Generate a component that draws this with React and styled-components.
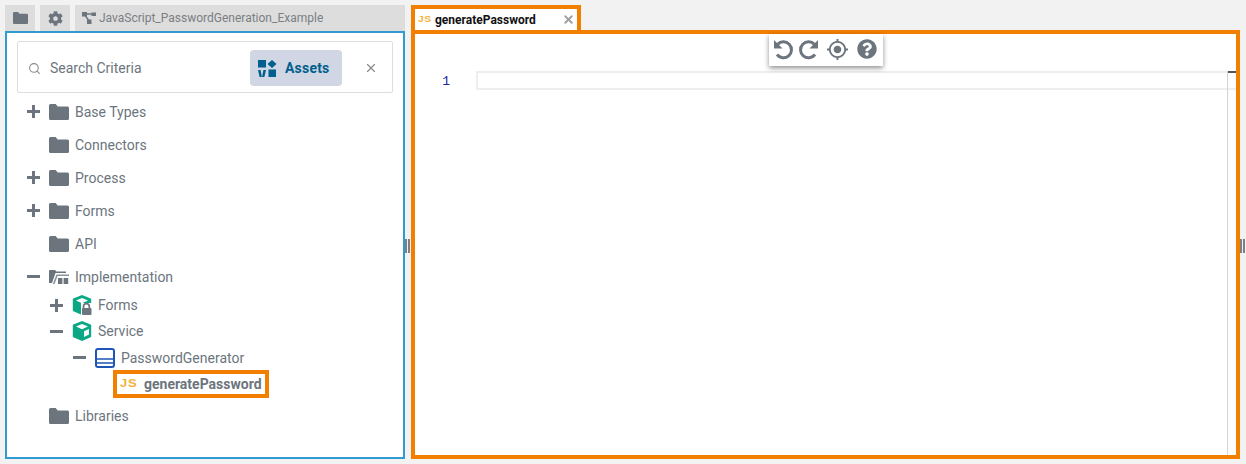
import React from "react";
import styled, { createGlobalStyle } from "styled-components";
import { FaCog, FaQuestionCircle } from "react-icons/fa";
import { MdGpsFixed } from "react-icons/md";
import { Search, X } from "lucide-react";

const Global = createGlobalStyle`
  html, body { margin: 0; padding: 0; background: #f2f2f2; }
  body { font-family: Roboto, "Liberation Sans", sans-serif; }
  * { box-sizing: border-box; }
`;

const Page = styled.div`
  display: flex;
  width: 1246px;
  height: 464px;
  padding: 5px 0 5px 5px;
  overflow: hidden;
`;
const LeftColumn = styled.div`
  width: 400px;
  display: flex;
  flex-direction: column;
`;
const RightColumn = styled.div`
  width: 829px;
  display: flex;
  flex-direction: column;
`;
const Splitter = styled.div`
  width: 6px;
  display: flex;
  align-items: center;
  justify-content: flex-start;
  padding-top: 27px;
`;
const Grip = styled.div`
  width: 5px;
  height: 14px;
  border-left: 2px solid #7c8086;
  border-right: 2px solid #7c8086;
`;
const TabStrip = styled.div`
  display: flex;
  gap: 5px;
  height: 26px;
`;
const IconTab = styled.div`
  width: 30px;
  background: #dddddd;
  display: flex;
  align-items: center;
  justify-content: center;
  color: #6c757d;
`;
const ProjectTab = styled.div`
  flex: 1;
  background: #dddddd;
  display: flex;
  align-items: center;
  gap: 3px;
  padding-left: 7px;
  font-size: 12px;
  color: #7b7f84;
`;
const LeftPanel = styled.div`
  height: 428px;
  background: #fff;
  border: 2px solid #2f9bd1;
  padding: 8px 10px 0;
`;
const SearchBox = styled.div`
  height: 52px;
  border: 1px solid #dddddd;
  border-radius: 2px;
  display: flex;
  align-items: center;
  padding: 2px 0 0 10px;
  color: #6c757d;
  font-size: 14px;
`;
const SearchText = styled.span`
  margin-left: 9px;
  width: 200px;
`;
const AssetsButton = styled.div`
  width: 92px;
  height: 36px;
  background: #d0d6e4;
  border-radius: 4px;
  display: flex;
  align-items: center;
  gap: 8px;
  padding-left: 8px;
  color: #005f8c;
  font-weight: 700;
  font-size: 14px;
  letter-spacing: 0.2px;
`;
const ClearButton = styled.div`
  margin-left: 22px;
  display: flex;
  color: #8a8a8a;
`;
const Tree = styled.div`
  padding-top: 2px;
  margin-left: -10px;
`;
const Row = styled.div`
  height: ${(p) => p.$h}px;
  display: flex;
  align-items: center;
  padding-left: ${(p) => p.$indent}px;
  font-size: 14px;
  color: #6c757d;
`;
const ToggleSlot = styled.div`
  width: 13px;
  height: 13px;
  margin-right: 9px;
  display: flex;
  align-items: center;
  justify-content: center;
`;
const IconSlot = styled.div`
  width: 20px;
  display: flex;
  justify-content: center;
  margin-right: 6px;
`;
const Highlight = styled.div`
  height: 28px;
  width: 156px;
  margin-left: 106px;
  border: 4px solid #f27f00;
  display: flex;
  align-items: center;
  padding-left: 3px;
  gap: 8px;
  font-size: 14px;
  font-weight: 700;
  color: #6c757d;
`;
const JsMark = styled.span`
  display: inline-block;
  width: ${(p) => p.$w}px;
  font-family: "Liberation Sans", sans-serif;
  font-weight: 700;
  font-size: ${(p) => p.$size}px;
  letter-spacing: 0.5px;
  color: #f5b23d;
  line-height: 1;
  transform: scaleX(${(p) => p.$sx});
  transform-origin: left center;
`;
const EditorTab = styled.div`
  width: 170px;
  height: 25px;
  background: #fff;
  border: 4px solid #f27f00;
  border-bottom: 0;
  display: flex;
  align-items: center;
  padding-left: 3px;
  gap: 4px;
  font-size: 12px;
  font-weight: 700;
  color: #111;
`;
const TabTitle = styled.span`
  width: 123px;
`;
const TabClose = styled.div`
  display: flex;
  color: #a0a0a0;
`;
const EditorPanel = styled.div`
  position: relative;
  height: 429px;
  background: #fff;
  border: 4px solid #f27f00;
  padding-top: 37px;
  display: flex;
  flex-direction: column;
`;
const Toolbar = styled.div`
  position: absolute;
  top: 0;
  left: 354px;
  width: 114px;
  height: 32px;
  background: #fff;
  box-shadow: 0 2px 5px rgba(0, 0, 0, 0.45);
  display: flex;
  align-items: center;
  padding: 0 0 2px 3px;
  color: #6c757d;
`;
const ToolSpacer = styled.div`
  width: ${(p) => p.$w}px;
`;
const CodeArea = styled.div`
  flex: 1;
  display: flex;
`;
const Gutter = styled.div`
  width: 61px;
  height: 19px;
  text-align: right;
  padding-right: 26px;
  font-family: "Liberation Mono", monospace;
  font-size: 13px;
  line-height: 21px;
  color: #1a2a9c;
`;
const Lines = styled.div`
  flex: 1;
  display: flex;
`;
const LineColumn = styled.div`
  flex: 1;
`;
const CurrentLine = styled.div`
  height: 19px;
  border: 2px solid #eeeeee;
  border-right: 0;
`;
const Ruler = styled.div`
  width: 9px;
  background: #fdfdfb;
  border-left: 1px solid #d4d4d4;
`;
const RulerHead = styled.div`
  height: 2px;
  background: #555;
`;
const RulerLine = styled.div`
  height: 2px;
  margin-top: 15px;
  background: #eeeeee;
`;

const FolderIcon = () => (
  <svg width="20" height="16" viewBox="0 0 20 16">
    <path d="M0 1.5A1.5 1.5 0 0 1 1.5 0h5.2l2 2.4h9.8A1.5 1.5 0 0 1 20 3.9v10.6a1.5 1.5 0 0 1-1.5 1.5h-17A1.5 1.5 0 0 1 0 14.5z" fill="#6c757d" />
  </svg>
);
const SmallFolder = () => (
  <svg width="15" height="12" viewBox="0 0 20 16">
    <path d="M0 1.5A1.5 1.5 0 0 1 1.5 0h5.2l2 2.4h9.8A1.5 1.5 0 0 1 20 3.9v10.6a1.5 1.5 0 0 1-1.5 1.5h-17A1.5 1.5 0 0 1 0 14.5z" fill="#6c757d" />
  </svg>
);
const OpenFolder = () => (
  <svg width="20" height="14" viewBox="0 0 20 14">
    <path d="M0 1a1 1 0 0 1 1-1h5l1.5 1.5H17V3H6.5L3 13H0z" fill="#6c757d" />
    <path d="M7.5 4.5H20V6H8.6L5.5 14H3.8z" fill="#8a929a" />
    <rect x="9" y="8" width="4.4" height="6" fill="#6c757d" />
    <rect x="14.6" y="8" width="4.6" height="6" fill="#6c757d" />
  </svg>
);
const FlowIcon = () => (
  <svg width="14" height="12" viewBox="0 0 14 12">
    <rect x="0" y="0" width="5" height="4.5" fill="#6c757d" />
    <rect x="9.5" y="0.5" width="4.5" height="3.5" fill="#6c757d" />
    <rect x="5" y="7.5" width="4.5" height="4.5" fill="#6c757d" />
    <path d="M4 2h7M3 3l4 6" stroke="#6c757d" strokeWidth="1.4" fill="none" />
  </svg>
);
const AssetsIcon = () => (
  <svg width="19" height="17" viewBox="0 0 19 17">
    <rect x="0" y="0" width="8" height="7.5" fill="#005f8c" />
    <path d="M14 0l4.5 4-4.5 4-4.5-4z" fill="#005f8c" />
    <rect x="10.5" y="9.5" width="7.5" height="7.5" fill="#005f8c" />
    <path d="M0 10h2.6l1.3 7H1.6zM8 10H5.4L4.1 17h2.3z" fill="#005f8c" />
  </svg>
);
const Cube = ({ locked }) => (
  <svg width="20" height="20" viewBox="0 0 20 20">
    <path d="M10 0l8.6 3.6a1 1 0 0 1 .6 .9v10.8a1 1 0 0 1-.6 .9L10 20l-8.6-3.8a1 1 0 0 1-.6-.9V4.500a1 1 0 0 1 .6-.9z" fill="#0aa884" />
    <path d="M10 3l6 2.6L10 8.200 4 5.600z" fill="#fff" />
    <path d="M12 10.200l5-2.200v5.600l-5 2.300z" fill="#fff" />
    {locked && (
      <g>
        <rect x="9" y="8" width="11" height="12" fill="#fff" />
        <path d="M11.500 13.500v-1.900a2.900 2.900 0 0 1 5.800 0v1.900" stroke="#6c757d" strokeWidth="1.700" fill="none" />
        <rect x="10" y="13" width="9.500" height="7" rx="1" fill="#6c757d" />
      </g>
    )}
  </svg>
);
const ClassIcon = () => (
  <svg width="20" height="20" viewBox="0 0 20 20">
    <rect x="1" y="1" width="18" height="18" rx="2" fill="none" stroke="#2055b8" strokeWidth="2" />
    <path d="M1 11h18M1 15h18" stroke="#2055b8" strokeWidth="1.500" />
  </svg>
);
const Plus = () => (
  <svg width="13" height="13" viewBox="0 0 13 13">
    <path d="M0 6.500h13M6.500 0v13" stroke="#6c757d" strokeWidth="3" />
  </svg>
);
const Minus = () => (
  <svg width="13" height="13" viewBox="0 0 13 13">
    <path d="M0 6.500h13" stroke="#6c757d" strokeWidth="3" />
  </svg>
);
const UndoIcon = ({ flip }) => (
  <svg width="22" height="22" viewBox="0 0 22 22" style={flip ? { transform: "scaleX(-1)" } : undefined}>
    <path d="M5.500 6.500A8 8 0 1 1 5 16.500" fill="none" stroke="#6c757d" strokeWidth="3" />
    <path d="M2 2v8.500h8.500z" fill="#6c757d" />
  </svg>
);

const TreeRow = ({ h = 33, indent, toggle, icon, label }) => (
  <Row $h={h} $indent={indent}>
    <ToggleSlot>{toggle === "+" ? <Plus /> : toggle === "-" ? <Minus /> : null}</ToggleSlot>
    <IconSlot>{icon}</IconSlot>
    <span>{label}</span>
  </Row>
);

export default function App() {
  return (
    <>
      <Global />
      <Page>
        <LeftColumn>
          <TabStrip>
            <IconTab><SmallFolder /></IconTab>
            <IconTab><FaCog size={15} /></IconTab>
            <ProjectTab><FlowIcon />JavaScript_PasswordGeneration_Example</ProjectTab>
          </TabStrip>
          <LeftPanel>
            <SearchBox>
              <Search size={13} color="#8a8a8a" />
              <SearchText>Search Criteria</SearchText>
              <AssetsButton><AssetsIcon />Assets</AssetsButton>
              <ClearButton><X size={14} /></ClearButton>
            </SearchBox>
            <Tree>
              <TreeRow indent={20} toggle="+" icon={<FolderIcon />} label="Base Types" />
              <TreeRow indent={20} icon={<FolderIcon />} label="Connectors" />
              <TreeRow indent={20} toggle="+" icon={<FolderIcon />} label="Process" />
              <TreeRow indent={20} toggle="+" icon={<FolderIcon />} label="Forms" />
              <TreeRow indent={20} icon={<FolderIcon />} label="API" />
              <TreeRow indent={20} toggle="-" icon={<OpenFolder />} label="Implementation" />
              <TreeRow h={24} indent={43} toggle="+" icon={<Cube locked />} label="Forms" />
              <TreeRow h={28} indent={43} toggle="-" icon={<Cube />} label="Service" />
              <TreeRow h={25} indent={66} toggle="-" icon={<ClassIcon />} label="PasswordGenerator" />
              <Highlight><JsMark $size={10} $w={16} $sx={1.3}>JS</JsMark>generatePassword</Highlight>
              <TreeRow h={35} indent={20} icon={<FolderIcon />} label="Libraries" />
            </Tree>
          </LeftPanel>
        </LeftColumn>
        <Splitter><Grip /></Splitter>
        <RightColumn>
          <EditorTab>
            <JsMark $size={9} $w={13} $sx={1.15}>JS</JsMark>
            <TabTitle>generatePassword</TabTitle>
            <TabClose><X size={13} strokeWidth={3.5} /></TabClose>
          </EditorTab>
          <EditorPanel>
            <Toolbar>
              <UndoIcon />
              <ToolSpacer $w={4} />
              <UndoIcon flip />
              <ToolSpacer $w={6} />
              <MdGpsFixed size={23} />
              <ToolSpacer $w={8} />
              <FaQuestionCircle size={20} />
            </Toolbar>
            <CodeArea>
              <Gutter>1</Gutter>
              <Lines>
                <LineColumn><CurrentLine /></LineColumn>
                <Ruler>
                  <RulerHead />
                  <RulerLine />
                </Ruler>
              </Lines>
            </CodeArea>
          </EditorPanel>
        </RightColumn>
        <Splitter><Grip /></Splitter>
      </Page>
    </>
  );
}
